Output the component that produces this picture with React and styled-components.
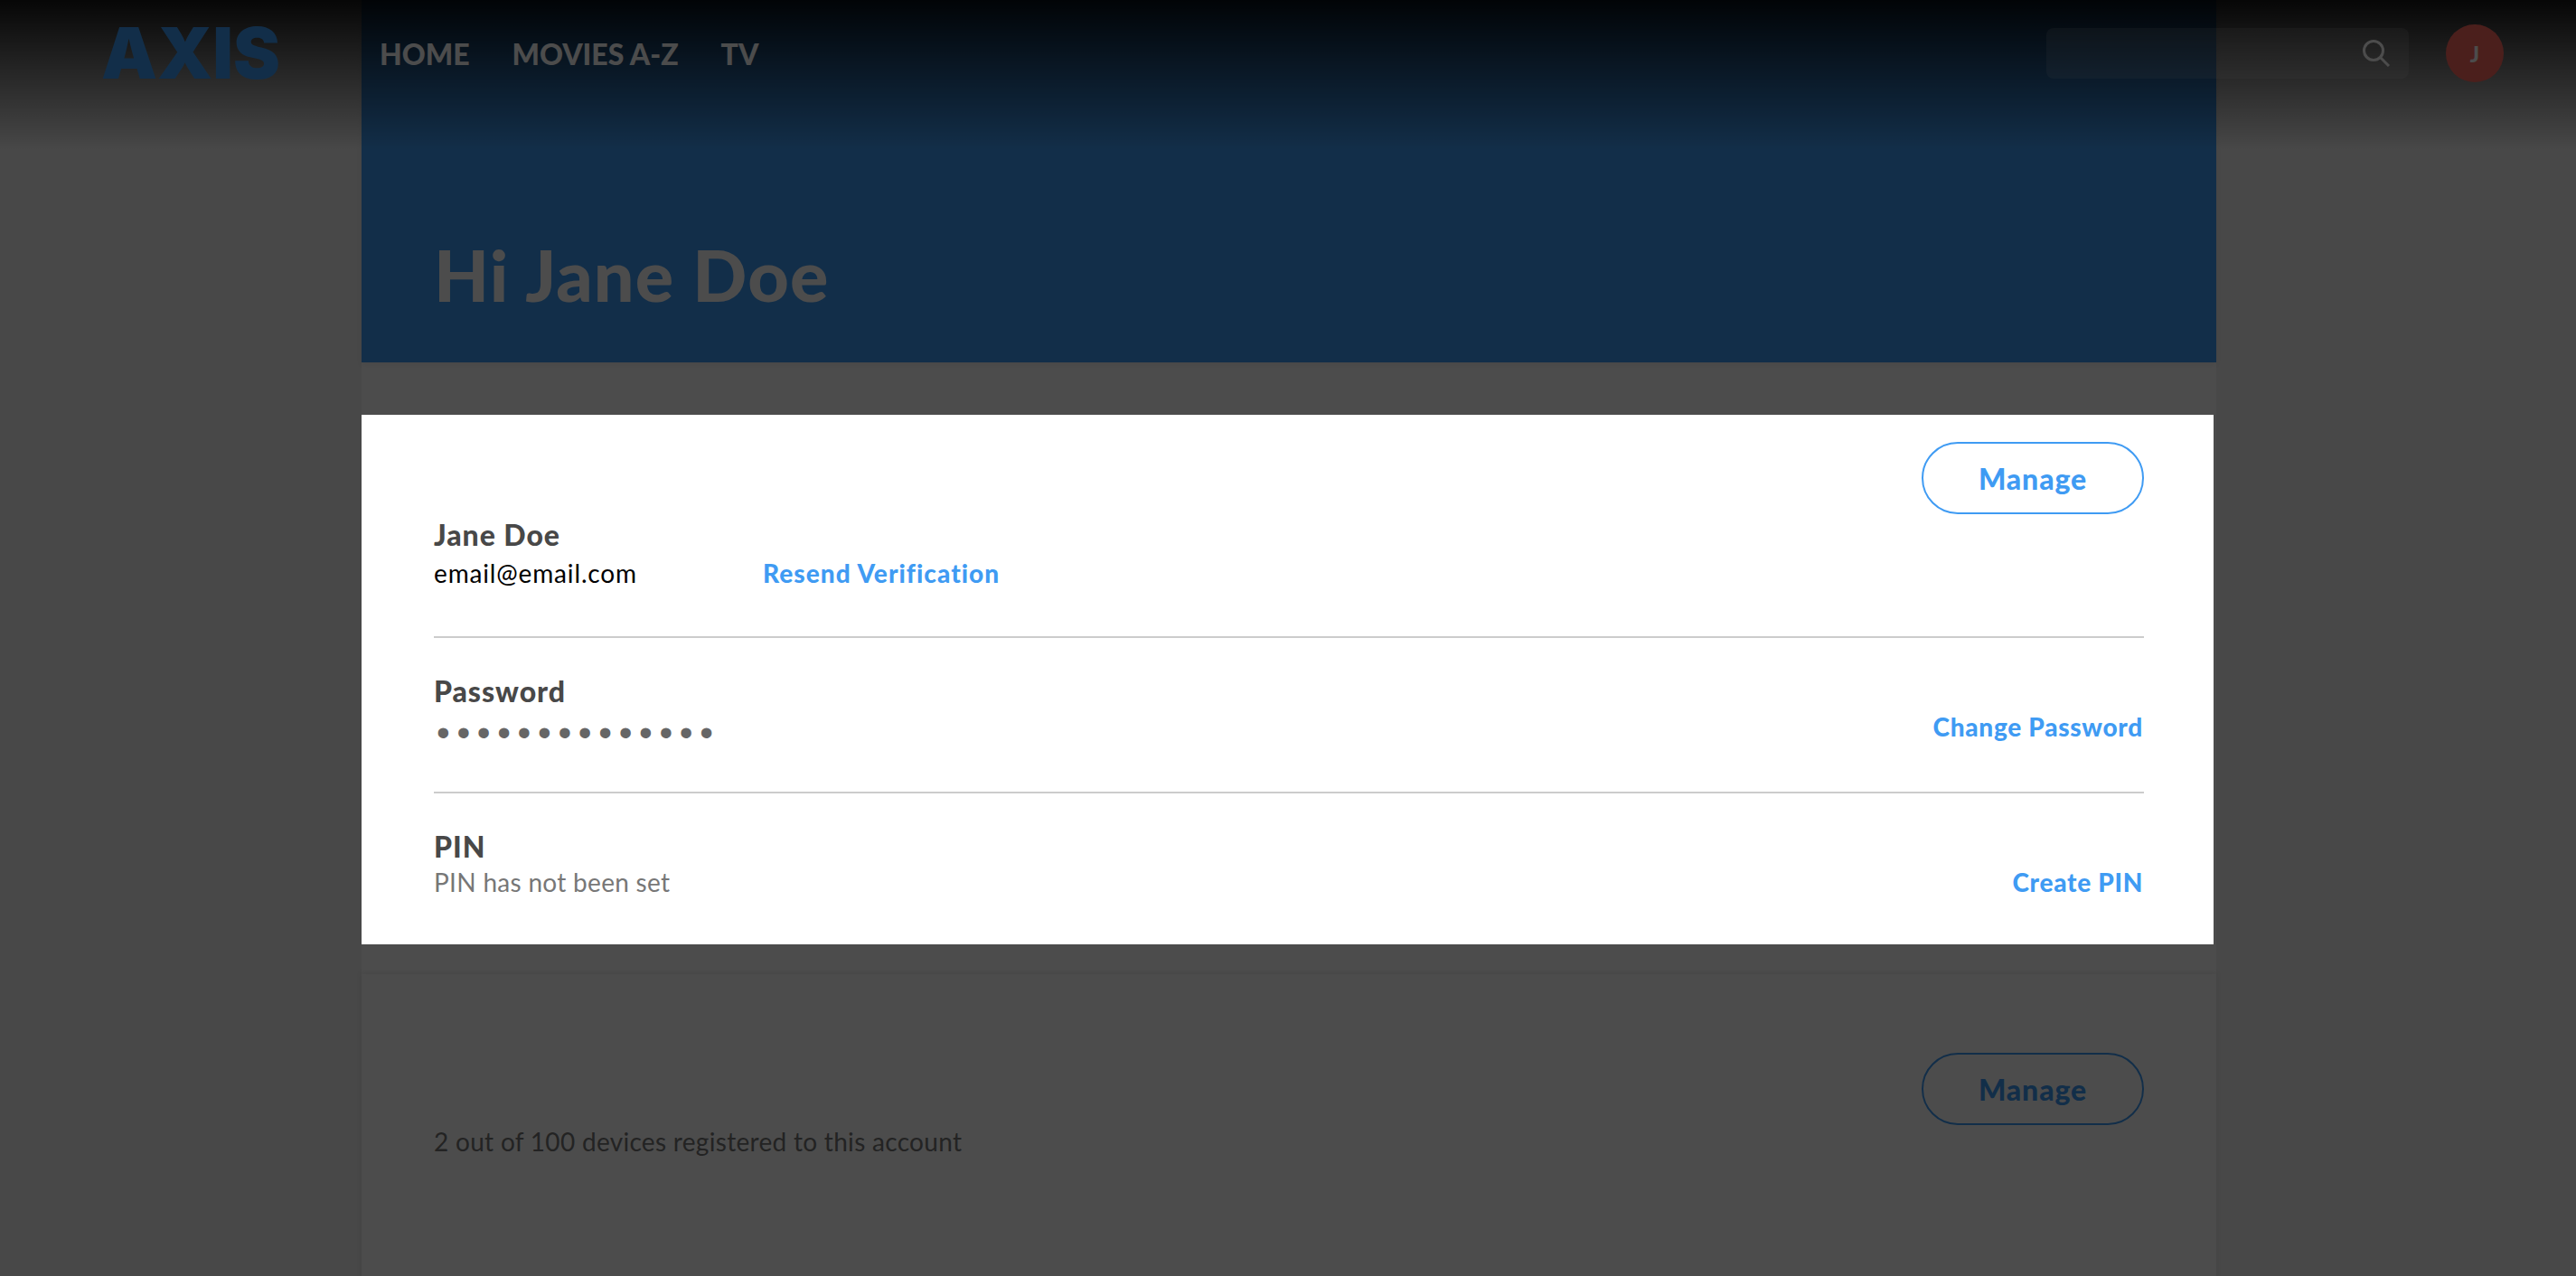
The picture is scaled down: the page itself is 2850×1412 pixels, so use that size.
import React from 'react';
import styled, { createGlobalStyle } from 'styled-components';

const GlobalStyle = createGlobalStyle`
  html, body {
    margin: 0;
    padding: 0;
    background: #f0f0f0;
    font-family: 'Lato', 'Open Sans', sans-serif;
  }
`;

const blue = '#3f9bf3';

const Page = styled.div`
  position: relative;
  height: 1412px;
  overflow: hidden;
  background: #f0f0f0;
`;

const Header = styled.header`
  position: absolute;
  top: 0;
  left: 0;
  right: 0;
  z-index: 5;
  box-sizing: border-box;
  height: 165px;
  padding: 0 80px 47px 112px;
  display: flex;
  align-items: center;
  background: linear-gradient(to bottom, rgba(0, 0, 0, 0.9), rgba(0, 0, 0, 0));
`;

const Logo = styled.div`
  width: 308px;
  font-family: 'Inter', 'Liberation Sans', sans-serif;
  font-size: 78px;
  font-weight: 900;
  line-height: 1;
  color: ${blue};
`;

const Nav = styled.nav`
  display: flex;
  gap: 47px;
`;

const NavLink = styled.a`
  font-size: 32px;
  font-weight: 900;
  color: #fff;
`;

const SearchBox = styled.div`
  margin-left: auto;
  box-sizing: border-box;
  width: 401px;
  height: 56px;
  padding-right: 21px;
  display: flex;
  align-items: center;
  border-radius: 8px;
  background: rgba(255, 255, 255, 0.12);
`;

const SearchInput = styled.input`
  flex: 1;
  min-width: 0;
  border: 0;
  outline: 0;
  background: none;
`;

const Avatar = styled.div`
  margin-left: 41px;
  width: 64px;
  height: 64px;
  border-radius: 50%;
  display: flex;
  align-items: center;
  justify-content: center;
  background: #fa6a60;
  color: #fff;
  font-size: 24px;
  font-weight: 900;
`;

const Column = styled.main`
  margin-left: 400px;
  width: 2052px;
  height: 100%;
  background: #fff;
`;

const Hero = styled.section`
  box-sizing: border-box;
  height: 401px;
  padding: 256px 0 0 80px;
  background: ${blue};
  box-shadow: 0 3px 6px rgba(0, 0, 0, 0.06);
`;

const Greeting = styled.h1`
  margin: 0;
  font-size: 79px;
  line-height: 96px;
  font-weight: 900;
  letter-spacing: 1.2px;
  color: #fff;
`;

const Overlay = styled.div`
  position: absolute;
  inset: 0;
  z-index: 10;
  background: rgba(0, 0, 0, 0.7);
`;

const ModalCard = styled.section`
  position: relative;
  z-index: 20;
  box-sizing: border-box;
  width: 2049px;
  height: 586px;
  margin-top: 58px;
  padding: 30px 77px 0 80px;
  background: #fff;
`;

const Row = styled.div`
  display: flex;
  justify-content: space-between;
  align-items: flex-end;
  padding: 38px 0 ${(p) => p.$bottom}px;
  border-bottom: ${(p) => (p.$last ? '0' : '2px solid #ccc')};
`;

const TopRow = styled(Row)`
  display: block;
  padding-top: 0;
`;

const ButtonRow = styled.div`
  display: flex;
  justify-content: flex-end;
`;

const ManageButton = styled.button`
  box-sizing: border-box;
  width: 246px;
  height: 80px;
  padding: 0;
  border: 2px solid ${blue};
  border-radius: 40px;
  background: #fff;
  font-family: inherit;
  font-size: 32px;
  font-weight: 900;
  letter-spacing: 0.9px;
  color: ${blue};
`;

const Title = styled.div`
  margin: 1px 0;
  font-size: 32px;
  line-height: 40px;
  font-weight: 900;
  letter-spacing: 0.95px;
  color: #484848;
`;

const NameTitle = styled(Title)`
  margin-top: 3px;
`;

const Value = styled.div`
  font-size: 28px;
  line-height: 36px;
  letter-spacing: 0.3px;
  color: ${(p) => p.$color || '#000'};
`;

const EmailLine = styled.div`
  display: flex;
  margin-top: 4px;
`;

const Email = styled(Value)`
  width: 364px;
  letter-spacing: 0.85px;
`;

const TextLink = styled.a`
  font-size: 28px;
  line-height: 36px;
  font-weight: 900;
  letter-spacing: 0.7px;
  color: ${blue};
`;

const ResendLink = styled(TextLink)`
  letter-spacing: 1.05px;
`;

const ActionLink = styled(TextLink)`
  margin-right: 1px;
`;

const PasswordDots = styled.div`
  height: 36px;
  padding-left: 3px;
  font-family: 'Liberation Sans', sans-serif;
  font-size: 42px;
  line-height: 50px;
  letter-spacing: 7.7px;
  color: #666;
`;

const Devices = styled.section`
  box-sizing: border-box;
  height: 340px;
  margin-top: 33px;
  padding: 87px 80px 0;
  background: #fff;
  box-shadow: 0 -2px 6px rgba(0, 0, 0, 0.08);
`;

export default function App() {
  return (
    <Page>
      <GlobalStyle />
      <Header>
        <Logo>AXIS</Logo>
        <Nav>
          <NavLink>HOME</NavLink>
          <NavLink>MOVIES A-Z</NavLink>
          <NavLink>TV</NavLink>
        </Nav>
        <SearchBox>
          <SearchInput aria-label="Search" />
          <svg width="30" height="30" viewBox="0 0 30 30" fill="none" stroke="#fff" strokeWidth="3">
            <circle cx="12" cy="12" r="10.5" />
            <line x1="19.5" y1="19.5" x2="29" y2="29" />
          </svg>
        </SearchBox>
        <Avatar>J</Avatar>
      </Header>
      <Column>
        <Hero>
          <Greeting>Hi Jane Doe</Greeting>
        </Hero>
        <ModalCard>
          <TopRow $bottom={52}>
            <ButtonRow>
              <ManageButton>Manage</ManageButton>
            </ButtonRow>
            <NameTitle>Jane Doe</NameTitle>
            <EmailLine>
              <Email>email@email.com</Email>
              <ResendLink>Resend Verification</ResendLink>
            </EmailLine>
          </TopRow>
          <Row $bottom={54}>
            <div>
              <Title>Password</Title>
              <PasswordDots>••••••••••••••</PasswordDots>
            </div>
            <ActionLink>Change Password</ActionLink>
          </Row>
          <Row $bottom={51} $last>
            <div>
              <Title>PIN</Title>
              <Value $color="#777">PIN has not been set</Value>
            </div>
            <ActionLink>Create PIN</ActionLink>
          </Row>
        </ModalCard>
        <Devices>
          <ButtonRow>
            <ManageButton>Manage</ManageButton>
          </ButtonRow>
          <Value $color="#777">2 out of 100 devices registered to this account</Value>
        </Devices>
      </Column>
      <Overlay />
    </Page>
  );
}
